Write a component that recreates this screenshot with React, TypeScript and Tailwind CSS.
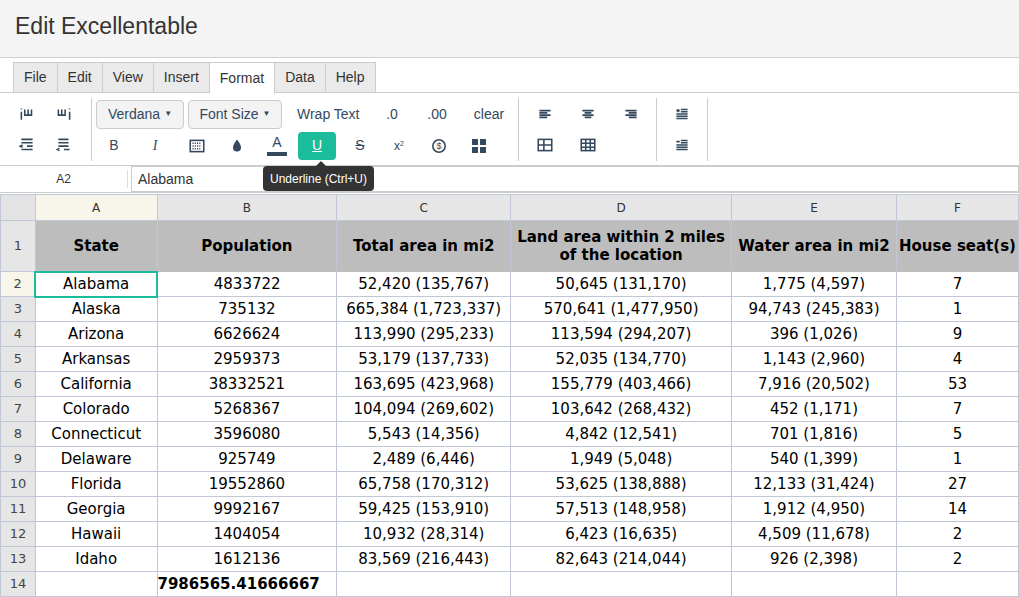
import React from "react";

const rows: string[][] = [
  ["Alabama","4833722","52,420 (135,767)","50,645 (131,170)","1,775 (4,597)","7"],
  ["Alaska","735132","665,384 (1,723,337)","570,641 (1,477,950)","94,743 (245,383)","1"],
  ["Arizona","6626624","113,990 (295,233)","113,594 (294,207)","396 (1,026)","9"],
  ["Arkansas","2959373","53,179 (137,733)","52,035 (134,770)","1,143 (2,960)","4"],
  ["California","38332521","163,695 (423,968)","155,779 (403,466)","7,916 (20,502)","53"],
  ["Colorado","5268367","104,094 (269,602)","103,642 (268,432)","452 (1,171)","7"],
  ["Connecticut","3596080","5,543 (14,356)","4,842 (12,541)","701 (1,816)","5"],
  ["Delaware","925749","2,489 (6,446)","1,949 (5,048)","540 (1,399)","1"],
  ["Florida","19552860","65,758 (170,312)","53,625 (138,888)","12,133 (31,424)","27"],
  ["Georgia","9992167","59,425 (153,910)","57,513 (148,958)","1,912 (4,950)","14"],
  ["Hawaii","1404054","10,932 (28,314)","6,423 (16,635)","4,509 (11,678)","2"],
  ["Idaho","1612136","83,569 (216,443)","82,643 (214,044)","926 (2,398)","2"],
];
const widths = [35,122,180,174,221,165,122];

function Ic({children}:{children:React.ReactNode}) {
  return <svg width="18" height="18" viewBox="0 0 16 16" fill="none" stroke="#34495e" strokeWidth="1.4">{children}</svg>;
}

export default function App() {
  const arial = { fontFamily: '"Liberation Sans", Arial, sans-serif' };
  const verd = { fontFamily: '"DejaVu Sans", Verdana, sans-serif' };
  return (
    <div className="w-[1019px] h-[597px] overflow-hidden bg-white relative" style={arial}>
      <div className="h-[58px] bg-[#f4f4f4] border-b border-[#d0d0d0] pl-[15px] pt-[9px] text-[23px] text-[#333]">Edit Excellentable</div>
      <div className="flex pl-[14px] pt-[4px] border-b border-[#ccc] h-[35px]">
        {["File","Edit","View","Insert","Format","Data","Help"].map(t => (
          <div key={t} className={`px-[10px] h-[31px] flex items-center text-[14px] text-[#333] border border-[#ccc] -ml-px ${t==="Format"?"bg-white border-b-white h-[32px]":"bg-[#eaeaea]"}`}>{t}</div>
        ))}
      </div>
      <div className="flex h-[72px] items-stretch pt-[5px] pb-[4px] text-[14px] text-[#34495e]">
        <div className="w-[92px] grid grid-cols-2 grid-rows-2 place-items-center border-r border-[#ccc] px-[8px]">
          <Ic><path d="M3 3v1M3 6v7M6 4v5h6V4M9 4v5M12 4v5" /></Ic>
          <Ic><path d="M3 4v5h6V4M6 4v5M13 3v1M13 6v7" /></Ic>
          <Ic><path d="M3 3h10M3 6h10M8 9h5M3 12h10M4 8l-2 1 2 1" /></Ic>
          <Ic><path d="M3 3h9M3 6h9M3 9h9M8 12h5M4 11l-2 1 2 1" /></Ic>
        </div>
        <div className="flex flex-col justify-around pl-[4px] w-[427px] border-r border-[#ccc]">
          <div className="flex items-center gap-[4px]">
            <div className="h-[29px] w-[88px] border border-[#ccc] rounded bg-[#f3f3f3] flex items-center justify-center gap-1">Verdana <span className="text-[8px]">▼</span></div>
            <div className="h-[29px] w-[94px] border border-[#ccc] rounded bg-[#f3f3f3] flex items-center justify-center gap-1">Font Size <span className="text-[8px]">▼</span></div>
            <div className="ml-[11px] w-[76px]">Wrap Text</div>
            <div className="w-[30px] text-center">.0</div>
            <div className="w-[52px] text-center">.00</div>
            <div className="w-[44px] text-center">clear</div>
          </div>
          <div className="flex items-center">
            <div className="w-[40px] text-center ml-[-2px]">B</div>
            <div className="w-[42px] text-center italic" style={{fontFamily:'"Liberation Serif", serif'}}>I</div>
            <div className="w-[42px] flex justify-center"><Ic><rect x="2" y="3" width="12" height="10" /><path d="M4 5.5h8M4 8h8M4 10.5h8" strokeDasharray="1 1"/></Ic></div>
            <div className="w-[38px] flex justify-center"><svg width="14" height="15" viewBox="0 0 14 14"><path d="M7 1C5 4 3 6 3 9a4 4 0 0 0 8 0c0-3-2-5-4-8z" fill="#34495e"/></svg></div>
            <div className="w-[42px] flex flex-col items-center"><span className="leading-[15px]">A</span><span className="w-[20px] h-[4px] bg-[#34495e] mt-[2px]" /></div>
            <div className="w-[38px] h-[28px] bg-[#1abc9c] rounded-sm flex items-center justify-center text-white underline">U</div>
            <div className="w-[48px] text-center line-through">S</div>
            <div className="w-[30px] text-center text-[12px]">x<sup className="text-[7px]">2</sup></div>
            <div className="w-[50px] flex justify-center"><Ic><circle cx="8" cy="8" r="5.5"/><text x="8" y="11" fontSize="8" textAnchor="middle" fill="#34495e" stroke="none">$</text></Ic></div>
            <div className="w-[30px] flex justify-center"><svg width="14" height="14" viewBox="0 0 14 14" fill="#34495e"><rect x="0" y="0" width="6" height="6"/><rect x="8" y="0" width="6" height="6"/><rect x="0" y="8" width="6" height="6"/><rect x="8" y="8" width="6" height="6"/></svg></div>
          </div>
        </div>
        <div className="w-[138px] border-r border-[#ccc] grid grid-cols-3 grid-rows-2 place-items-center px-[4px]">
          <Ic><path d="M3 5h10M3 7h7M3 9h10M3 11h7"/></Ic>
          <Ic><path d="M3 5h10M5 7h6M3 9h10M5 11h6"/></Ic>
          <Ic><path d="M3 5h10M6 7h7M3 9h10M6 11h7"/></Ic>
          <Ic><rect x="2" y="3" width="12" height="10"/><path d="M2 8h12M7 3v10"/></Ic>
          <Ic><rect x="2" y="3" width="12" height="10"/><path d="M2 6.5h12M2 10h12M6 3v10M10 3v10"/></Ic>
          <span/>
        </div>
        <div className="w-[51px] border-r border-[#ccc] flex flex-col items-center justify-around">
          <Ic><path d="M7 4h6M7 6h6M3 8h10M3 10h10M3 12h10M3 5h3M4.5 3.5v3"/></Ic>
          <Ic><path d="M7 4h6M7 6h6M3 8h10M3 10h10M3 12h10M3 5h3"/></Ic>
        </div>
      </div>
      <div className="flex h-[28px] border-t border-b border-[#ccc] items-center">
        <div className="w-[128px] text-center text-[12px] text-[#333] border-r border-[#ddd]">A2</div>
        <div className="ml-[3px] flex-1 h-[26px] border border-[#ccc] px-[6px] flex items-center text-[14px] text-[#333]">Alabama</div>
      </div>
      <div className="absolute left-[263px] top-[166px] h-[25px] px-[7px] bg-[#333] text-white text-[12px] rounded flex items-center">Underline (Ctrl+U)
        <span className="absolute left-[53px] -top-[5px] w-0 h-0 border-x-[5px] border-x-transparent border-b-[5px] border-b-[#333]" /></div>
      <table className="border-collapse table-fixed text-[15px] text-black mt-[1px]" style={verd}>
        <colgroup>{widths.map((w,i)=><col key={i} style={{width:w}}/>)}</colgroup>
        <thead>
          <tr className="h-[26px] text-[12px] text-[#333]">
            <th className="bg-[#e3e3e3] border border-[#c0c8d6] font-normal"></th>
            {["A","B","C","D","E","F"].map(c=>(
              <th key={c} className={`border border-[#c0c8d6] font-normal ${c==="A"?"bg-[#f8f6ea]":"bg-[#e6e6e6]"}`}>{c}</th>
            ))}
          </tr>
        </thead>
        <tbody>
          <tr className="h-[51px]">
            <td className="bg-[#e6e6e6] border border-[#c0c8d6] text-center text-[13px] text-[#444]">1</td>
            {["State","Population","Total area in mi2","Land area within 2 miles of the location","Water area in mi2","House seat(s)"].map(h=>(
              <td key={h} className="bg-[#bdbdbd] border border-[#bdbdbd] border-r-[#c0c8d6] text-center font-bold leading-[18px] px-[2px] whitespace-nowrap">{h==="Land area within 2 miles of the location"?<>Land area within 2 miles<br/>of the location</>:h}</td>
            ))}
          </tr>
          {rows.map((r,i)=>(
            <tr key={i} className="h-[25px]">
              <td className={`border border-[#c0c8d6] text-center text-[13px] text-[#444] ${i===0?"bg-[#f8f6ea]":"bg-[#e6e6e6]"}`}>{i+2}</td>
              {r.map((v,j)=>(
                <td key={j} className={`border text-center whitespace-nowrap ${i===0&&j===0?"border-2 border-[#1abc9c]":"border-[#c0c8d6]"}`}>{v}</td>
              ))}
            </tr>
          ))}
          <tr className="h-[25px]">
            <td className="bg-[#e6e6e6] border border-[#c0c8d6] text-center text-[13px] text-[#444]">14</td>
            <td className="border border-[#c0c8d6]"></td>
            <td className="border border-[#c0c8d6] font-bold whitespace-nowrap">7986565.41666667</td>
            {[0,1,2,3].map(k=><td key={k} className="border border-[#c0c8d6]"></td>)}
          </tr>
        </tbody>
      </table>
    </div>
  );
}
